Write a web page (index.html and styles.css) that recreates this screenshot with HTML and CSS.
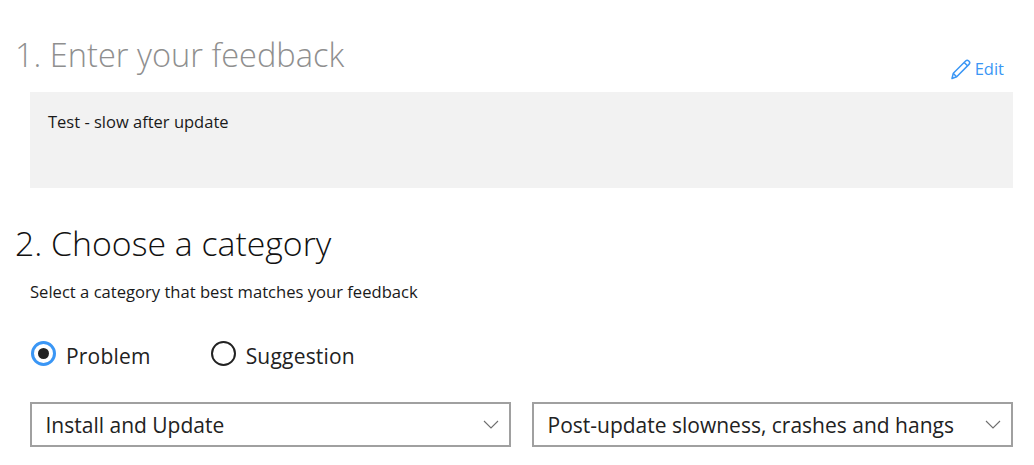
FILE: index.html
```html
<!DOCTYPE html>
<html lang="en">
<head>
    <meta charset="UTF-8">
    <title>Feedback</title>
    <link rel="stylesheet" href="styles.css">
</head>
<body>

    <div class="step-head">
        <h2 class="step-title done">1. Enter your feedback</h2>
        <a class="edit-link">
            <svg width="22" height="22" viewBox="0 0 22 22" fill="none" stroke="#3a96f5" stroke-width="1.5" stroke-linejoin="round">
                <path d="M2 20.5l1.3-5.2L15.6 3a2.2 2.2 0 0 1 3.1 0l.3.3a2.2 2.2 0 0 1 0 3.1L6.7 18.8z"/>
                <path d="M3.4 15.4l3.2 3.3M14.2 4.5l3.3 3.3"/>
            </svg>
            Edit
        </a>
    </div>

    <div class="feedback-box">Test - slow after update</div>

    <h2 class="step-title second">2. Choose a category</h2>
    <p class="hint">Select a category that best matches your feedback</p>

    <div class="radio-row">
        <label class="radio-item"><span class="radio checked"></span>Problem</label>
        <label class="radio-item"><span class="radio"></span>Suggestion</label>
    </div>

    <div class="select-row">
        <div class="select">
            <span>Install and Update</span>
            <svg width="16" height="9" viewBox="0 0 16 9" fill="none" stroke="#6e6e6e" stroke-width="1.1"><path d="M1 1l7 7 7-7"/></svg>
        </div>
        <div class="select">
            <span>Post-update slowness, crashes and hangs</span>
            <svg width="16" height="9" viewBox="0 0 16 9" fill="none" stroke="#6e6e6e" stroke-width="1.1"><path d="M1 1l7 7 7-7"/></svg>
        </div>
    </div>

</body>
</html>
```

FILE: styles.css
```css
body {
    font-family: "Open Sans", "Noto Sans", sans-serif;
    background-color: #fff;
    color: #1a1a1a;
    margin: 0;
    padding: 30px 21px 0 15px;
    height: 465px;
    box-sizing: border-box;
    overflow: hidden;
}

.step-head {
    display: flex;
    justify-content: space-between;
    align-items: flex-end;
    height: 50px;
}

.step-title {
    font-size: 32.6px;
    font-weight: 300;
    line-height: 44px;
    margin: 0;
}

.step-title.done {
    color: #8f8f8f;
    align-self: flex-start;
    margin-top: 3px;
}

.step-title.second {
    color: #111;
    font-size: 33.8px;
    margin-top: 33px;
}

.edit-link {
    display: flex;
    align-items: center;
    gap: 3px;
    color: #3a96f5;
    font-size: 16.5px;
    margin-right: 9px;
}

.feedback-box {
    background-color: #f2f2f2;
    margin: 12px 0 0 15px;
    height: 96px;
    padding: 19px 18px 0;
    box-sizing: border-box;
    font-size: 16.5px;
    line-height: 22px;
}

.hint {
    font-size: 16.6px;
    line-height: 22px;
    margin: 16px 0 0 15px;
}

.radio-row {
    display: flex;
    gap: 60px;
    margin: 40px 0 0 16px;
}

.radio-item {
    display: flex;
    align-items: center;
    gap: 10px;
    font-size: 21px;
    letter-spacing: 0.2px;
    line-height: 26px;
    color: #222;
}

.radio {
    width: 25px;
    height: 25px;
    border: 2px solid #222;
    border-radius: 50%;
    box-sizing: border-box;
    position: relative;
    top: -3px;
}

.radio.checked {
    border: 3px solid #3a96f5;
    display: flex;
    align-items: center;
    justify-content: center;
}

.radio.checked::after {
    content: "";
    width: 11px;
    height: 11px;
    border-radius: 50%;
    background-color: #222;
}

.select-row {
    display: grid;
    grid-template-columns: 481px 481px;
    gap: 21px;
    margin: 33px 0 0 15px;
}

.select {
    height: 45px;
    border: 2px solid #a0a0a0;
    box-sizing: border-box;
    display: flex;
    align-items: center;
    justify-content: space-between;
    padding: 0 10px 0 13.5px;
    font-size: 21px;
    color: #222;
}
```
